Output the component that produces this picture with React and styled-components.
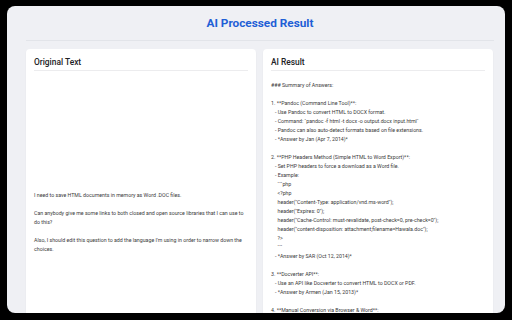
import styled, { createGlobalStyle } from 'styled-components';

const GlobalStyle = createGlobalStyle`
  html, body {
    margin: 0;
    padding: 0;
    background: #000;
  }
  body {
    font-family: Roboto, "Liberation Sans", Arial, sans-serif;
  }
`;

const Panel = styled.div`
  margin: 6px 7px 0;
  height: 307px;
  border-radius: 8px;
  overflow: hidden;
  background: #eff0f4;
`;

const Header = styled.header`
  margin: 0 11px 0 19px;
  height: 34px;
  display: flex;
  align-items: center;
  justify-content: center;
  border-bottom: 1px solid #e2e4e9;

  & > h1 {
    margin: 0;
    font-size: 11.8px;
    font-weight: 700;
    color: #1f5fd6;
  }
`;

const Columns = styled.main`
  padding: 8px 12px 0 19px;
  display: grid;
  grid-template-columns: 1fr 1fr;
  gap: 7px;
`;

const Card = styled.section`
  background: #fff;
  border-radius: 4px;
  padding: 0 8px;
  min-height: 300px;
  box-shadow: 0 1px 2px rgba(0, 0, 0, 0.06);
`;

const CardTitle = styled.h2`
  margin: 0;
  padding: 8px 0 3px;
  font-size: 8.4px;
  line-height: 10px;
  font-weight: 500;
  color: #202124;
  border-bottom: 1px solid #ececee;
`;

const Body = styled.div`
  margin-top: 10px;
  padding-top: ${(p) => p.$top || 0}px;
  white-space: pre-wrap;
  font-size: 5.25px;
  line-height: 9px;
  color: #3a3a3a;
`;

const original = `I need to save HTML documents in memory as Word .DOC files.

Can anybody give me some links to both closed and open source libraries that I can use to do this?

Also, I should edit this question to add the language I'm using in order to narrow down the choices.`;

const result = `### Summary of Answers:

1. **Pandoc (Command Line Tool)**:
   - Use Pandoc to convert HTML to DOCX format.
   - Command: \`pandoc -f html -t docx -o output.docx input.html\`
   - Pandoc can also auto-detect formats based on file extensions.
   - *Answer by Jan (Apr 7, 2014)*

2. **PHP Headers Method (Simple HTML to Word Export)**:
   - Set PHP headers to force a download as a Word file.
   - Example:
     \`\`\`php
     <?php
     header("Content-Type: application/vnd.ms-word");
     header("Expires: 0");
     header("Cache-Control: must-revalidate, post-check=0, pre-check=0");
     header("content-disposition: attachment;filename=Hawala.doc");
     ?>
     \`\`\`
   - *Answer by SAR (Oct 12, 2014)*

3. **Docverter API**:
   - Use an API like Docverter to convert HTML to DOCX or PDF.
   - *Answer by Armen (Jan 15, 2013)*

4. **Manual Conversion via Browser & Word**:`;

const App = () => {
  return (
    <>
      <GlobalStyle />
      <Panel>
        <Header>
          <h1>AI Processed Result</h1>
        </Header>
        <Columns>
          <Card>
            <CardTitle>Original Text</CardTitle>
            <Body $top={110}>{original}</Body>
          </Card>
          <Card>
            <CardTitle>AI Result</CardTitle>
            <Body>{result}</Body>
          </Card>
        </Columns>
      </Panel>
    </>
  );
};

export default App;
